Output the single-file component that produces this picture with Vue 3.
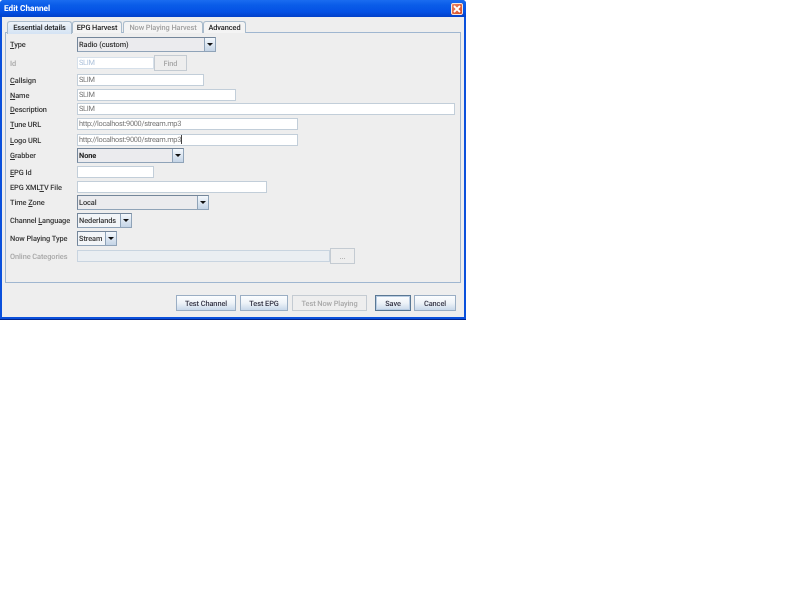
<script setup>
const tabs = [
  { label: 'Essential details', cls: 'active' },
  { label: 'EPG Harvest', cls: 'epg' },
  { label: 'Now Playing Harvest', cls: 'off' },
  { label: 'Advanced', cls: 'adv' },
]
</script>

<template>
  <div class="window">
    <div class="titlebar">
      <span class="title">Edit Channel</span>
      <span class="close">
        <svg width="12" height="12" viewBox="0 0 12 12"><path d="M3 3l6 6M9 3l-6 6" stroke="#fff" stroke-width="1.8" fill="none" /></svg>
      </span>
    </div>
    <div class="body">
      <div class="tabs">
        <div v-for="t in tabs" :key="t.label" class="tab" :class="t.cls">{{ t.label }}</div>
      </div>
      <div class="panel">
        <div class="form">
          <div class="row">
            <label class="lbl"><u>T</u>ype</label>
            <div class="combo w139"><span class="val">Radio (custom)</span><span class="arrow"></span></div>
          </div>
          <div class="row">
            <label class="lbl dim">Id</label>
            <div class="input w77 ghost">SLIM</div>
            <div class="btn off find">Find</div>
          </div>
          <div class="row">
            <label class="lbl"><u>C</u>allsign</label>
            <div class="input w127 grey">SLIM</div>
          </div>
          <div class="row">
            <label class="lbl"><u>N</u>ame</label>
            <div class="input w159 grey">SLIM</div>
          </div>
          <div class="row tight">
            <label class="lbl"><u>D</u>escription</label>
            <div class="input full grey">SLIM</div>
          </div>
          <div class="row">
            <label class="lbl"><u>T</u>une URL</label>
            <div class="input w221 grey">http://localhost:9000/stream.mp3</div>
          </div>
          <div class="row loose">
            <label class="lbl"><u>L</u>ogo URL</label>
            <div class="input w221 grey">http://localhost:9000/stream.mp3<span class="caret"></span></div>
          </div>
          <div class="row tight">
            <label class="lbl"><u>G</u>rabber</label>
            <div class="combo w107"><span class="val strong">None</span><span class="arrow"></span></div>
          </div>
          <div class="row">
            <label class="lbl"><u>E</u>PG Id</label>
            <div class="input w77"></div>
          </div>
          <div class="row">
            <label class="lbl">EPG XML<u>T</u>V File</label>
            <div class="input w190"></div>
          </div>
          <div class="row tight">
            <label class="lbl">Time <u>Z</u>one</label>
            <div class="combo w132"><span class="val">Local</span><span class="arrow"></span></div>
          </div>
          <div class="row">
            <label class="lbl">Channel <u>L</u>anguage</label>
            <div class="combo w55 plain"><span class="val">Nederlands</span><span class="arrow"></span></div>
          </div>
          <div class="row">
            <label class="lbl">Now Playing Type</label>
            <div class="combo w40 plain"><span class="val">Stream</span><span class="arrow"></span></div>
          </div>
          <div class="row tight">
            <label class="lbl dim">Online Categories</label>
            <div class="input w253 disabled"></div>
            <div class="btn off dots">...</div>
          </div>
        </div>
      </div>
      <div class="actions">
        <div class="btn tc">Test Channel</div>
        <div class="btn te">Test EPG</div>
        <div class="btn off tn">Test Now Playing</div>
        <div class="btn save">Save</div>
        <div class="btn cancel">Cancel</div>
      </div>
    </div>
  </div>
</template>

<style>
html, body { background: #fff; margin: 0; }
</style>

<style scoped>
.window {
  width: 466px;
  height: 320px;
  box-sizing: border-box;
  display: flex;
  flex-direction: column;
  background: #0a50dc;
  border-radius: 4px 4px 0 0;
  border-bottom: 1px solid #02258c;
  padding: 0 2px 2px;
  font-family: Roboto, "Liberation Sans", sans-serif;
  font-size: 7.4px;
  letter-spacing: -0.08px;
  color: #2a2a2a;
  text-rendering: geometricPrecision;
  overflow: hidden;
  filter: blur(0.25px);
}
.titlebar {
  height: 17px;
  flex: none;
  margin: 0 -2px;
  padding: 0 3px 0 4px;
  display: flex;
  align-items: center;
  justify-content: space-between;
  background: linear-gradient(#1a6cf0 0, #0a5ce8 30%, #0451e4 70%, #0240c8 100%);
}
.title { color: #fff; font-weight: bold; font-size: 8.2px; letter-spacing: 0; }
.close {
  width: 12px;
  height: 12px;
  border-radius: 2px;
  outline: 1px solid #f4e8e0;
  outline-offset: -1px;
  background: linear-gradient(135deg, #e8886a, #d8481c);
  display: flex;
}
.body {
  flex: 1;
  background: #eeeeee;
  padding: 4px 3px 0;
  display: flex;
  flex-direction: column;
  min-height: 0;
}
.tabs { display: flex; height: 12px; margin-bottom: -1px; padding-left: 2px; position: relative; z-index: 1; }
.tab {
  font-weight: 500;
  line-height: 11px;
  border: 1px solid #a9bbcc;
  border-bottom: none;
  background: #f4f4f4;
  color: #222;
  text-align: center;
  border-radius: 3px 3px 0 0;
  box-sizing: border-box;
  height: 12px;
  white-space: nowrap;
}
.tab.active { background: linear-gradient(#eef3f8, #d4e3f4); width: 65px; height: 13px; }
.tab.epg { width: 50px; }
.tab.off { color: #a0a0a0; width: 80px; margin-left: 1px; }
.tab.adv { width: 43px; }
.panel {
  height: 251px;
  flex: none;
  border: 1px solid #9fb6d0;
  box-sizing: border-box;
  width: 456px;
  padding: 4px 5px 0 3px;
}
.form { display: flex; flex-direction: column; gap: 3px; }
.row { display: flex; align-items: center; }
.row.tight { margin-top: -1px; }
.row.loose { margin-top: 1px; }
.lbl { width: 67px; margin-left: 1px; flex: none; font-weight: 500; color: #333; white-space: nowrap; }
.lbl.dim { color: #a8a8a8; }
.input {
  height: 12px;
  box-sizing: border-box;
  background: #fff;
  border: 1px solid #c2ced9;
  color: #777;
  padding-left: 1px;
  line-height: 10px;
  letter-spacing: -0.3px;
  white-space: nowrap;
}
.input.ghost { color: #b0c4dc; border-color: #d6e0ea; }
.input.disabled { background: #eaeef2; border-color: #c8d4e0; }
.caret { display: inline-block; width: 1px; height: 9px; background: #444; vertical-align: top; }
.full { width: 379px; }
.w77 { width: 77px; }
.w127 { width: 127px; }
.w159 { width: 159px; }
.w190 { width: 190px; }
.w221 { width: 221px; }
.w253 { width: 253px; }
.combo {
  height: 15px;
  box-sizing: border-box;
  display: flex;
  align-items: stretch;
  border: 1px solid #8fa3b8;
  border-top-color: #74869a;
  border-left-color: #74869a;
  background: #ebebee;
}
.combo.plain { background: #f2f5f8; }
.w139 { width: 139px; }
.w107 { width: 107px; }
.w132 { width: 132px; }
.w55 { width: 55px; }
.w40 { width: 40px; }
.val { flex: 1; padding-left: 1px; font-weight: 500; line-height: 13px; color: #333; white-space: nowrap; }
.val.strong { color: #222; font-weight: bold; }
.arrow {
  width: 10px;
  flex: none;
  border-left: 1px solid #8fa3b8;
  background: linear-gradient(#f4f8fc, #c4d4e6);
  position: relative;
}
.arrow::after {
  content: "";
  position: absolute;
  left: 2px;
  top: 5px;
  border-left: 3px solid transparent;
  border-right: 3px solid transparent;
  border-top: 3px solid #111;
}
.btn {
  height: 16px;
  box-sizing: border-box;
  border: 1px solid #9aaec4;
  background: linear-gradient(#fbfdff 0, #eef3f8 50%, #c8d8ea 100%);
  font-weight: 500;
  color: #334;
  display: flex;
  align-items: center;
  justify-content: center;
  white-space: nowrap;
}
.btn.off { background: #eeeeee; border-color: #c4cbd2; color: #a8a8a8; }
.find { width: 33px; }
.dots { width: 25px; }
.actions { display: flex; padding: 12px 0 0 171px; }
.tc { width: 60px; margin-right: 4px; }
.te { width: 48px; margin-right: 4px; }
.tn { width: 75px; margin-right: 8px; }
.save { width: 36px; margin-right: 3px; border-color: #5a7894; box-shadow: inset 0 0 0 1px #b8cce2; }
.cancel { width: 42px; }
</style>
